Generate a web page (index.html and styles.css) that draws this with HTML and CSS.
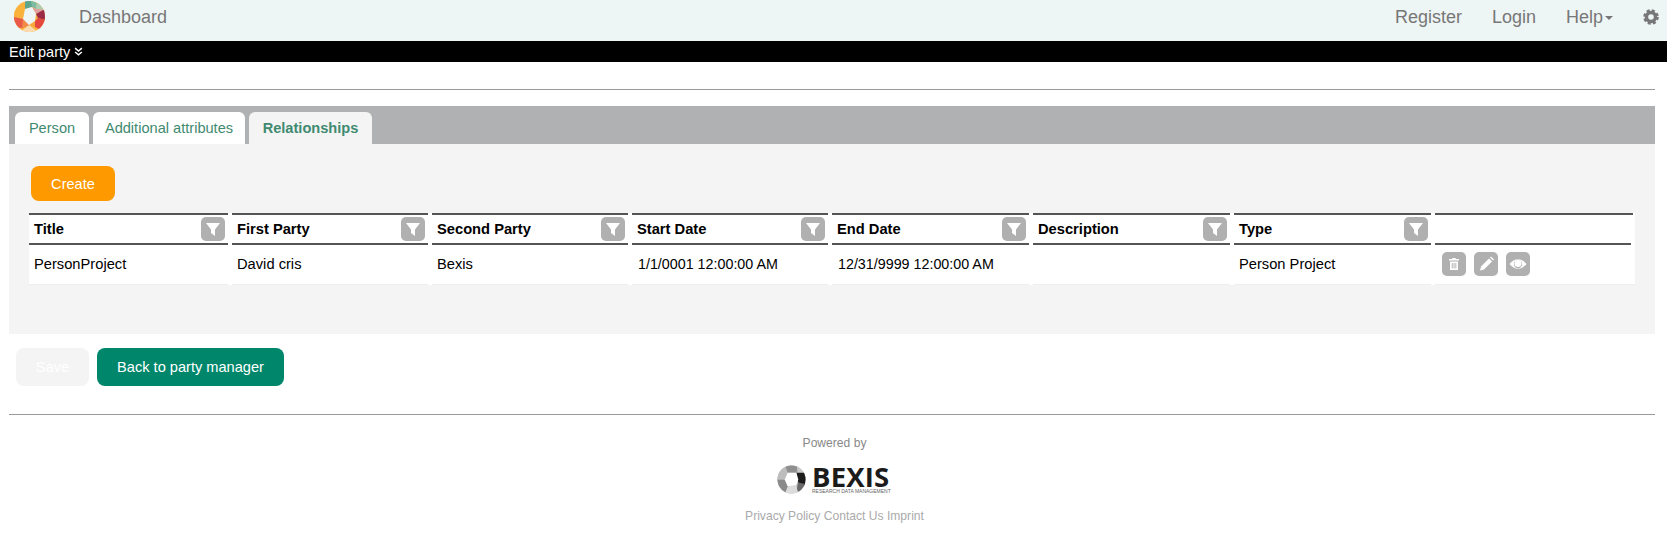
FILE: index.html
```html
<!DOCTYPE html>
<html lang="en">
<head>
<meta charset="utf-8">
<title>Edit party</title>
<link rel="stylesheet" href="styles.css">
</head>
<body>
<nav class="navbar">
  <div class="nav-left">
    <svg class="brand" viewBox="0 0 31 31" aria-hidden="true">
      <defs>
        <clipPath id="disc"><circle cx="15.5" cy="15.5" r="15.5"/></clipPath>
      </defs>
      <g clip-path="url(#disc)">
        <rect width="31" height="31" fill="#f9b23c"/>
        <polygon points="0,0 11,0 11,8 9,18 0,16" fill="#f9b23c"/>
        <polygon points="11,0 23,0 22,8 18,6 11,8" fill="#7dbca4"/>
        <polygon points="11,0 17,0 18,6 11,8" fill="#5fa58e"/>
        <polygon points="23,0 31,0 31,9 22,8" fill="#a9cdb6"/>
        <polygon points="18,6 22,8 31,9 22,13" fill="#e0a0a0"/>
        <polygon points="22,13 31,8 31,19 24,17" fill="#9c2b45"/>
        <polygon points="24,17 31,19 31,31 21,26 21,20" fill="#e4473d"/>
        <polygon points="21,20 21,26 15,24" fill="#f9a83c"/>
        <polygon points="15,24 24,31 6,31" fill="#fbdcb2"/>
        <polygon points="0,16 9,18 15,24 8,27 0,26" fill="#ea5a48"/>
        <polygon points="9,18 15,24 8,27" fill="#f28a4a"/>
        <polygon points="11,8 18,6 22,13 21,20 15,24 9,18" fill="#eef5f5"/>
      </g>
    </svg>
    <a class="nav-link">Dashboard</a>
  </div>
  <div class="nav-right">
    <a class="nav-link">Register</a>
    <a class="nav-link">Login</a>
    <a class="nav-link help">Help<span class="caret"></span></a>
    <svg class="gear" viewBox="0 0 16 16" aria-hidden="true">
      <circle class="gear-body" cx="8" cy="8" r="4.500"/>
      <circle class="gear-teeth" cx="8" cy="8" r="6.300"/>
    </svg>
  </div>
</nav>
<div class="menu-bar">
  <span>Edit party</span>
  <svg class="chev" viewBox="0 0 8 8" aria-hidden="true">
    <path d="M1 1l3 2.500L7 1M1 4.500L4 7l3-2.500"/>
  </svg>
</div>
<main class="content">
  <hr class="rule">
  <section class="tabs-panel">
    <div class="tabs">
      <a class="tab tab-person">Person</a>
      <a class="tab tab-attrs">Additional attributes</a>
      <a class="tab tab-rel active">Relationships</a>
    </div>
    <div class="panel">
      <button class="btn btn-create">Create</button>
      <div class="grid">
        <div class="th"><span>Title</span><span class="icon-btn"><svg viewBox="0 0 24 24"><path class="ico" d="M5 6h14l-5 6.500V19l-4-3v-3.500z"/></svg></span></div>
        <div class="th"><span>First Party</span><span class="icon-btn"><svg viewBox="0 0 24 24"><path class="ico" d="M5 6h14l-5 6.500V19l-4-3v-3.500z"/></svg></span></div>
        <div class="th"><span>Second Party</span><span class="icon-btn"><svg viewBox="0 0 24 24"><path class="ico" d="M5 6h14l-5 6.500V19l-4-3v-3.500z"/></svg></span></div>
        <div class="th"><span>Start Date</span><span class="icon-btn"><svg viewBox="0 0 24 24"><path class="ico" d="M5 6h14l-5 6.500V19l-4-3v-3.500z"/></svg></span></div>
        <div class="th"><span>End Date</span><span class="icon-btn"><svg viewBox="0 0 24 24"><path class="ico" d="M5 6h14l-5 6.500V19l-4-3v-3.500z"/></svg></span></div>
        <div class="th"><span>Description</span><span class="icon-btn"><svg viewBox="0 0 24 24"><path class="ico" d="M5 6h14l-5 6.500V19l-4-3v-3.500z"/></svg></span></div>
        <div class="th"><span>Type</span><span class="icon-btn"><svg viewBox="0 0 24 24"><path class="ico" d="M5 6h14l-5 6.500V19l-4-3v-3.500z"/></svg></span></div>
        <div class="th th-last"></div>
        <div class="td">PersonProject</div>
        <div class="td">David cris</div>
        <div class="td">Bexis</div>
        <div class="td td-date">1/1/0001 12:00:00 AM</div>
        <div class="td td-date">12/31/9999 12:00:00 AM</div>
        <div class="td"></div>
        <div class="td">Person Project</div>
        <div class="td td-actions">
          <span class="icon-btn"><svg viewBox="0 0 24 24"><path class="ico" fill-rule="evenodd" d="M10.500 6h3l.5 1h3v1.500H7V7h3zM8 9.500h8V18H8zM9.800 11v5.500h.9V11zM11.600 11v5.500h.9V11zM13.400 11v5.500h.9V11z"/></svg></span>
          <span class="icon-btn"><svg viewBox="0 0 24 24"><path class="ico" d="M15 6.500l3 3-8 8-4 1 1-4zM16 5.500l1-1 3 3-1 1z"/></svg></span>
          <span class="icon-btn"><svg viewBox="0 0 24 24"><path class="ico" fill-rule="evenodd" d="M3.500 12C6 8.800 9 7.200 12 7.200s6 1.600 8.500 4.800c-2.500 3.200-5.500 4.800-8.500 4.800S6 15.200 3.500 12zM12 7.800a4.200 4.200 0 1 0 0 8.400 4.200 4.200 0 0 0 0-8.400zM8.500 11a3.500 3.500 0 1 0 7 1 3.500 3.500 0 0 0-7-1z"/></svg></span>
        </div>
      </div>
    </div>
  </section>
  <div class="actions">
    <button class="btn btn-save">Save</button>
    <button class="btn btn-back">Back to party manager</button>
  </div>
  <hr class="rule rule-foot">
  <footer class="footer">
    <div class="powered">Powered by</div>
    <div class="bexis">
      <svg class="bexis-mark" viewBox="0 0 30 30" aria-hidden="true">
        <defs>
          <clipPath id="disc2"><circle cx="15" cy="15" r="14.500"/></clipPath>
        </defs>
        <g clip-path="url(#disc2)">
          <rect width="30" height="30" fill="#b5b5b5"/>
          <polygon points="8,0 22,0 20,8 11,8" fill="#8f8f8f"/>
          <polygon points="20,0 30,0 30,13 22,8" fill="#c9c9c9"/>
          <polygon points="20,8 30,8 30,22 22,18" fill="#1c1c1c"/>
          <polygon points="30,20 30,30 20,27 22,18" fill="#6a6a6a"/>
          <polygon points="20,21 22,30 8,30 11,22" fill="#dcdcdc"/>
          <polygon points="0,15 8,15 11,22 8,30 0,26" fill="#8a8a8a"/>
          <polygon points="0,4 8,0 11,8 8,15 0,15" fill="#bdbdbd"/>
          <polygon points="11,8 20,8 22,15 20,21 11,22 8,15" fill="#fff"/>
        </g>
      </svg>
      <div class="bexis-text">
        <div class="bexis-name">BEXIS</div>
        <div class="bexis-sub">RESEARCH DATA MANAGEMENT</div>
      </div>
    </div>
    <div class="links"><a>Privacy Policy</a> <a>Contact Us</a> <a>Imprint</a></div>
  </footer>
</main>
</body>
</html>
```
FILE: styles.css
```css
* { box-sizing: border-box; }
html, body { margin: 0; padding: 0; }
body {
  font-family: "Liberation Sans", Arial, sans-serif;
  font-size: 14px;
  color: #000;
  background: #fff;
  overflow: hidden;
}
.navbar {
  height: 41px;
  background: #eef5f5;
  display: flex;
  justify-content: space-between;
  color: #777;
  font-size: 18px;
}
.nav-left { display: flex; align-items: flex-start; padding-left: 14px; }
.brand { width: 31px; height: 31px; margin-top: 1px; }
.nav-link { line-height: 34px; color: #777; }
.nav-left .nav-link { margin-left: 34px; }
.nav-right { display: flex; align-items: flex-start; padding-right: 8px; }
.nav-right .nav-link { margin-right: 30px; }
.nav-right .help { margin-right: 30px; }
.caret {
  display: inline-block;
  margin-left: 2px;
  vertical-align: middle;
  border-top: 4px solid #777;
  border-left: 4px solid transparent;
  border-right: 4px solid transparent;
}
.gear { width: 16px; height: 16px; margin-top: 9px; }
.gear-body { fill: none; stroke: #777; stroke-width: 3.400; }
.gear-teeth { fill: none; stroke: #777; stroke-width: 3; stroke-dasharray: 2.900 2.050; }
.menu-bar {
  height: 21px;
  background: #000;
  color: #fff;
  font-size: 14.500px;
  line-height: 20px;
  padding-left: 9px;
  display: flex;
  align-items: center;
  gap: 4px;
}
.chev { width: 9px; height: 9px; }
.chev path { fill: none; stroke: #fff; stroke-width: 1.300; }
.content { padding: 27px 12px 0 9px; }
.rule { margin: 0; border: 0; height: 1px; background: #999; }
.tabs-panel { margin-top: 16px; }
.tabs {
  background: #b0b1b2;
  height: 38px;
  padding: 6px 0 0 6px;
  display: flex;
  gap: 4px;
}
.tab {
  height: 32px;
  line-height: 32px;
  background: #fff;
  color: #3f8a70;
  border-radius: 6px 6px 0 0;
  font-size: 14.600px;
  text-align: center;
}
.tab-person { width: 74px; }
.tab-attrs { width: 152px; }
.tab-rel { width: 123px; }
.tab.active {
  background: #f4f4f4;
  font-weight: bold;
}
.panel {
  background: #f4f4f4;
  height: 190px;
  padding: 22px 0 0 22px;
}
.btn {
  border: 0;
  font-family: inherit;
  font-size: 14.600px;
  color: #fff;
  border-radius: 8px;
  padding: 0 20px;
}
.btn-create {
  display: block;
  height: 35px;
  width: 84px;
  padding: 0;
  background: #ff9900;
}
.grid {
  margin-top: 12px;
  margin-left: -2px;
  width: 1606px;
  background: #fff;
  display: grid;
  grid-template-columns: 199px 196px 196px 196px 197px 197px 197px 200px;
  column-gap: 4px;
  font-size: 14.700px;
}
.th {
  height: 32px;
  border-top: 2px solid #555;
  border-bottom: 2px solid #555;
  background: #fff;
  font-weight: bold;
  padding: 0 3px 0 5px;
  display: flex;
  justify-content: space-between;
  align-items: center;
}
.th-last {
  margin-right: 2px;
  border-bottom: 0;
  background: linear-gradient(#555, #555) left bottom / calc(100% - 2px) 2px no-repeat;
}
.td {
  height: 40px;
  background: #fff;
  border-bottom: 1px solid #eee;
  line-height: 38px;
  padding-left: 5px;
}
.td-date { font-size: 14.300px; padding-left: 6px; }
.td-actions {
  display: flex;
  align-items: center;
  gap: 8px;
  padding: 0 0 2px 7px;
}
.icon-btn {
  width: 24px;
  height: 24px;
  border-radius: 5px;
  background: #b0b0b0;
  display: block;
}
.icon-btn svg { display: block; width: 24px; height: 24px; }
.ico { fill: #fff; }
.actions { display: flex; gap: 8px; padding: 14px 0 0 7px; }
.actions .btn { height: 38px; }
.btn-save { width: 73px; padding: 0; background: #f4f4f4; color: #fff; }
.btn-back { width: 187px; padding: 0; background: #00876b; }
.rule-foot { margin-top: 28px; }
.footer {
  padding: 21px 0 0 5px;
  text-align: center;
  color: #888;
  font-size: 12.100px;
}
.powered { line-height: 14px; }
.bexis {
  margin-top: 15px;
  margin-right: 2px;
  display: flex;
  justify-content: center;
  gap: 6px;
  height: 30px;
}
.bexis-mark { width: 29px; height: 29px; }
.bexis-text { text-align: left; width: 78px; }
.bexis-name {
  font-family: "Open Sans", sans-serif;
  font-size: 27.500px;
  line-height: 23px;
  font-weight: 700;
  color: #1b1b1b;
  letter-spacing: 0.200px;
}
.bexis-sub {
  font-size: 5px;
  line-height: 6px;
  color: #666;
  white-space: nowrap;
}
.links { margin-top: 14px; color: #aaa; line-height: 14px; }
```
